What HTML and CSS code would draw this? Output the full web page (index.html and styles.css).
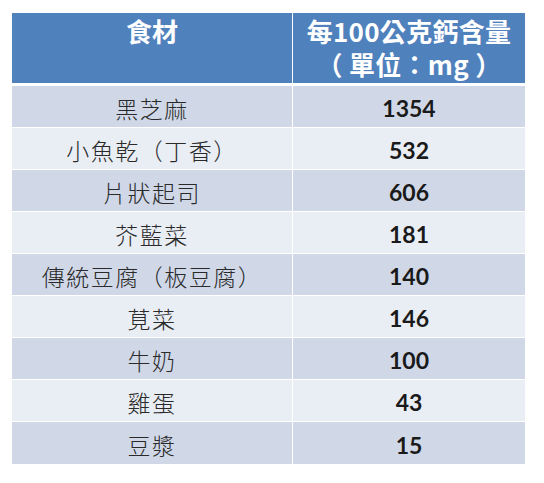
FILE: index.html
```html
<!DOCTYPE html>
<html lang="zh-Hant">
<head>
    <meta charset="UTF-8">
    <title>每100公克鈣含量</title>
    <link rel="stylesheet" href="styles.css">
</head>
<body>
    <div class="sheet">
        <table class="calcium-table">
            <thead>
                <tr>
                    <th class="col-food">食材</th>
                    <th class="col-value">
                        <span class="head-line">每100公克鈣含量</span>
                        <span class="head-line">（ 單位：mg ）</span>
                    </th>
                </tr>
            </thead>
            <tbody>
                <tr><td class="food">黑芝麻</td><td class="value">1354</td></tr>
                <tr><td class="food">小魚乾（丁香）</td><td class="value">532</td></tr>
                <tr><td class="food">片狀起司</td><td class="value">606</td></tr>
                <tr><td class="food">芥藍菜</td><td class="value">181</td></tr>
                <tr><td class="food">傳統豆腐（板豆腐）</td><td class="value">140</td></tr>
                <tr><td class="food">莧菜</td><td class="value">146</td></tr>
                <tr><td class="food">牛奶</td><td class="value">100</td></tr>
                <tr><td class="food">雞蛋</td><td class="value">43</td></tr>
                <tr><td class="food">豆漿</td><td class="value">15</td></tr>
            </tbody>
        </table>
    </div>
</body>
</html>
```

FILE: styles.css
```css
:root {
    --header-blue: #4f81bd;
    --band-dark: #d0d8e8;
    --band-light: #e9edf4;
    --text-dark: #1a1a1a;
}

body {
    margin: 0;
    background: #ffffff;
    font-family: 'Noto Sans CJK TC', 'Noto Sans', sans-serif;
}

.sheet {
    padding: 13px 0 0 12px;
}

.calcium-table {
    width: 513px;
    border-collapse: separate;
    border-spacing: 0;
    table-layout: fixed;
}

.col-food {
    width: 280px;
}

.calcium-table th {
    box-sizing: border-box;
    height: 73px;
    padding: 1px 0 0;
    background-color: var(--header-blue);
    color: #ffffff;
    font-size: 26px;
    font-weight: 700;
    line-height: 33px;
    text-align: center;
    vertical-align: top;
    border-bottom: 3px solid #ffffff;
}

.head-line {
    display: block;
    height: 33px;
    white-space: pre;
    letter-spacing: 0.3px;
}

.calcium-table td {
    box-sizing: border-box;
    height: 42px;
    padding: 3px 0 0;
    text-align: center;
    vertical-align: middle;
    border-bottom: 1px solid #ffffff;
}

.calcium-table th + th,
.calcium-table td + td {
    border-left: 1px solid #ffffff;
}

.calcium-table tbody tr:nth-child(odd) td {
    background-color: var(--band-dark);
}

.calcium-table tbody tr:nth-child(even) td {
    background-color: var(--band-light);
}

.calcium-table tbody tr:last-child td {
    border-bottom: none;
}

.food {
    font-size: 23px;
    font-weight: 300;
    color: #2a2a2a;
    letter-spacing: 1.5px;
}

.value {
    font-family: 'Lato', 'Open Sans', sans-serif;
    font-size: 23px;
    font-weight: 700;
    color: var(--text-dark);
}
```
